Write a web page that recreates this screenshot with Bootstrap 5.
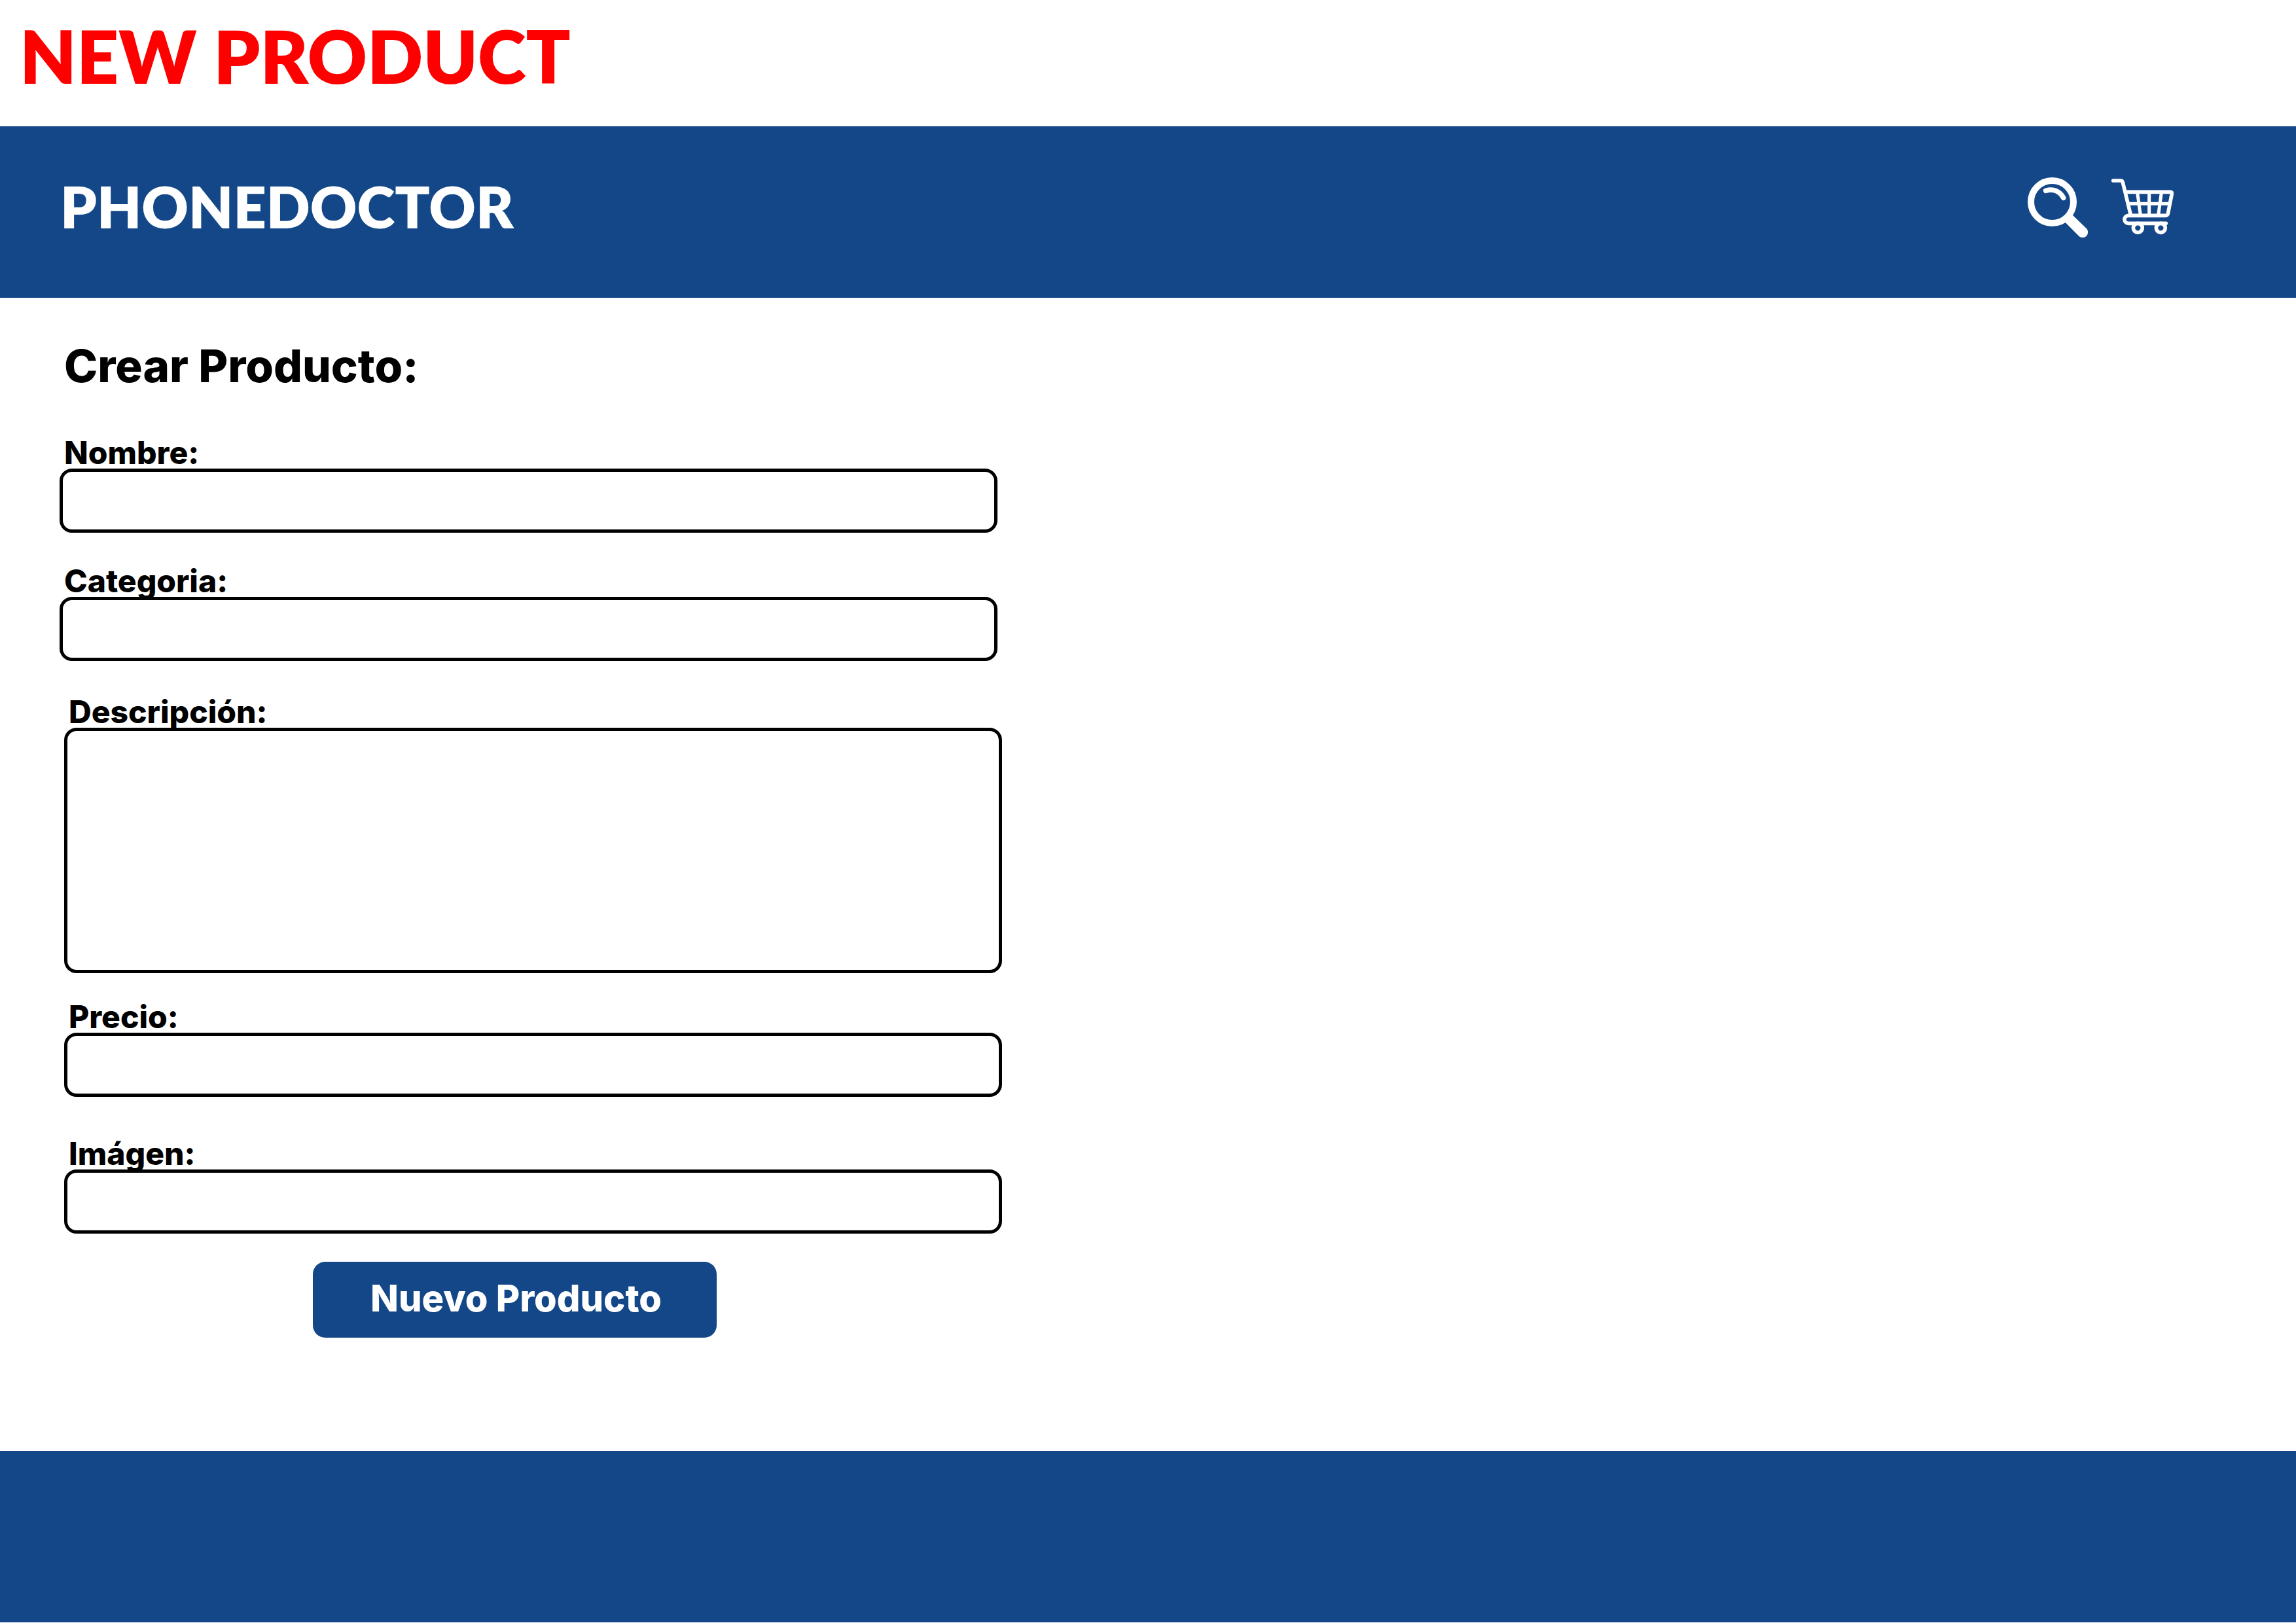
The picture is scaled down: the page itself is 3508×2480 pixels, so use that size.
<!DOCTYPE html>
<html lang="es">
<head>
<meta charset="utf-8">
<meta name="viewport" content="width=device-width, initial-scale=1">
<title>PhoneDoctor - Crear Producto</title>
<link href="https://cdn.jsdelivr.net/npm/bootstrap@5.3.0/dist/css/bootstrap.min.css" rel="stylesheet">
<style>
  :root { --brand-blue: #144788; }
  body { font-family: Inter, "Liberation Sans", sans-serif; color: #000; background: #fff; }
  .page-title { font: 800 112px/112px Lato, sans-serif; color: #f00; padding: 29px 30px 52px; }
  .bg-brand { background: var(--brand-blue); }
  .site-nav { min-height: 262px; padding: 0 187px 14px 92px; }
  .site-nav .navbar-brand { font: 800 88px/88px Lato, sans-serif; padding: 0 0 4px; }
  .nav-icons { gap: 36px; }
  .nav-icons svg { height: 92px; width: auto; }
  .site-main { padding: 70px 91px 60px; }
  .form-title { font-size: 69px; line-height: 68px; font-weight: 800; padding-left: 7px; margin-bottom: 75px; }
  .field { max-width: 1433px; margin-bottom: 50px; }
  .field .form-label { font-size: 48px; line-height: 48px; font-weight: 800; padding-left: 7px; margin: 0; }
  .field .form-control { height: 98px; border: 5px solid #000; border-radius: 19px; padding: 0 24px; font-size: 40px; color: #000; }
  .field textarea.form-control { height: 375px; padding: 16px 24px; resize: none; }
  .detail-fields { margin-left: 7px; padding-top: 4px; }
  .field-tight { margin-bottom: 43px; }
  .field-loose { margin-bottom: 63px; }
  .btn-brand, .btn-brand:hover { background: var(--brand-blue); color: #fff; }
  .btn-brand { width: 617px; max-width: 100%; height: 116px; border: 0; border-radius: 19px; padding: 0 0 4px 4px; font-size: 56px; line-height: 56px; font-weight: 800; margin-left: 380px; }
  .site-footer { height: 262px; margin-bottom: 1px; }
</style>
</head>
<body class="d-flex flex-column min-vh-100">
<h1 class="page-title m-0">NEW PRODUCT</h1>

<header>
  <nav class="navbar navbar-dark bg-brand site-nav d-flex justify-content-between align-items-center" aria-label="Principal">
    <a class="navbar-brand text-white m-0" href="#">PHONEDOCTOR</a>
    <div class="nav-icons d-flex align-items-center">
      <a class="d-flex" href="#" aria-label="Buscar">
        <svg viewBox="114 93 276 276" fill="none" stroke="#fff" stroke-linecap="round" aria-hidden="true">
          <circle cx="226.500" cy="205.500" r="97.500" stroke-width="30"/>
          <path d="M197 154c35-11 66 4 81 33" stroke-width="23"/>
          <path d="M321 262v5l63 61c9 10 8 25-1 34-9 9-25 9-34 0l-62-62h-8z" fill="#fff" stroke="none"/>
        </svg>
      </a>
      <a class="d-flex" href="#" aria-label="Carrito">
        <svg viewBox="498 93 285 276" fill="none" stroke="#fff" stroke-linecap="round" stroke-linejoin="round" aria-hidden="true">
          <path d="M506 108h36q6 0 8 8l37 152" stroke-width="17"/>
          <path d="M566 160h203q7 0 6 8l-18 92q-2 8-11 8H576a18 18 0 0 0 0 36h172" stroke-width="17"/>
          <path d="M580 214h186M671 162v104M617 164l14 102M727 164l-14 102" stroke-width="15"/>
          <circle cx="619" cy="325" r="21" stroke-width="17"/>
          <circle cx="724" cy="325" r="21" stroke-width="17"/>
        </svg>
      </a>
    </div>
  </nav>
</header>

<main class="site-main flex-grow-1">
  <h2 class="form-title">Crear Producto:</h2>
  <form>
    <div class="field d-flex flex-column">
      <label class="form-label" for="nombre">Nombre:</label>
      <input class="form-control" type="text" id="nombre">
    </div>
    <div class="field d-flex flex-column">
      <label class="form-label" for="categoria">Categoria:</label>
      <input class="form-control" type="text" id="categoria">
    </div>
    <div class="detail-fields">
      <div class="field field-tight d-flex flex-column">
        <label class="form-label" for="descripcion">Descripción:</label>
        <textarea class="form-control" id="descripcion"></textarea>
      </div>
      <div class="field field-loose d-flex flex-column">
        <label class="form-label" for="precio">Precio:</label>
        <input class="form-control" type="text" id="precio">
      </div>
      <div class="field field-tight d-flex flex-column">
        <label class="form-label" for="imagen">Imágen:</label>
        <input class="form-control" type="text" id="imagen">
      </div>
      <button class="btn btn-brand" type="button">Nuevo Producto</button>
    </div>
  </form>
</main>

<footer class="site-footer bg-brand"></footer>
<script src="https://cdn.jsdelivr.net/npm/bootstrap@5.3.0/dist/js/bootstrap.bundle.min.js"></script>
</body>
</html>
